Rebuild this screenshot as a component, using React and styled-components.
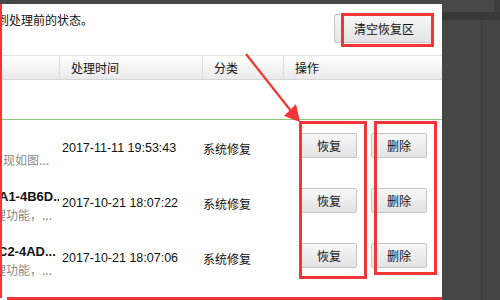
import React from "react";
import styled, { createGlobalStyle } from "styled-components";

const Global = createGlobalStyle`
  html, body { margin: 0; padding: 0; background: #464646; }
  body { font-family: "Liberation Sans", "Noto Sans CJK SC", sans-serif; }
`;

const Screen = styled.div`
  position: relative;
  width: 500px;
  height: 300px;
  overflow: hidden;
  display: flex;
  background: #464646;
`;

const Panel = styled.div`
  width: 442px;
  margin-top: 4px;
  height: 296px;
  background: #fff;
  display: flex;
  flex-direction: column;
  overflow: hidden;
`;

const Backdrop = styled.div`
  flex: 1;
  display: flex;
  flex-direction: column;
`;

const BackTop = styled.div`
  height: 12px;
  background: #484848;
  border-right: 6px solid #3e3e3e;
`;

const BackBand = styled.div`
  height: 8px;
  background: #383838;
`;

const BackRest = styled.div`
  flex: 1;
  background: #464646;
  border-right: 18px solid #444;
  box-shadow: inset -1px 0 0 #3c3c3c;
`;

const Top = styled.div`
  height: 51px;
  display: flex;
  justify-content: space-between;
  align-items: flex-start;
`;

const Desc = styled.div`
  margin-top: 9px;
  margin-left: -3px;
  font-size: 12px;
  line-height: 14px;
  color: #111;
  font-family: "Noto Sans CJK SC", sans-serif;
`;

const Btn = styled.button`
  box-sizing: border-box;
  width: ${(p) => p.$w}px;
  height: ${(p) => p.$h}px;
  padding: 0;
  border: 1px solid #c6c6c6;
  border-radius: 2px;
  background: linear-gradient(#f7f7f7, #e3e3e3);
  font-family: "Noto Sans CJK SC", sans-serif;
  font-size: 12px;
  color: #111;
  display: flex;
  align-items: center;
  justify-content: center;
`;

const TopBtn = styled(Btn)`
  margin-top: 10px;
  margin-right: 8px;
`;

const Grid = styled.div`
  display: grid;
  grid-template-columns: 59px 143px 81px 1fr;
`;

const Header = styled(Grid)`
  box-sizing: border-box;
  height: 25px;
  border-top: 1px solid #e2e2e2;
  border-bottom: 1px solid #d6d6d6;
  background: linear-gradient(#ffffff, #eaeaea);
`;

const HeadCell = styled.div`
  display: flex;
  align-items: center;
  padding-left: 11px;
  border-left: ${(p) => (p.$first ? "none" : "1px solid #dcdcdc")};
  font-family: "Noto Sans CJK SC", sans-serif;
  font-size: 12px;
  color: #111;
`;

const Gap = styled.div`
  height: 39px;
  border-bottom: 1px solid #86c978;
  flex-shrink: 0;
`;

const Row = styled(Grid)`
  height: 55px;
  flex-shrink: 0;
`;

const NameCell = styled.div`
  padding-top: 15px;
  display: flex;
  flex-direction: column;
  gap: 4px;
  white-space: nowrap;
  overflow: hidden;
`;

const Title = styled.div`
  font-size: 13px;
  line-height: 14px;
  font-weight: bold;
  color: #111;
  margin-left: ${(p) => p.$shift}px;
`;

const Sub = styled.div`
  font-family: "Noto Sans CJK SC", sans-serif;
  font-size: 12px;
  line-height: 14px;
  color: #8a8a8a;
  margin-left: ${(p) => p.$shift}px;
`;

const DateCell = styled.div`
  display: flex;
  align-items: center;
  padding-left: 3px;
  padding-top: 1px;
  font-size: 12.5px;
  color: #111;
  white-space: nowrap;
`;

const TypeCell = styled.div`
  display: flex;
  align-items: center;
  padding-left: 1px;
  padding-top: 1px;
  font-family: "Noto Sans CJK SC", sans-serif;
  font-size: 12px;
  color: #111;
`;

const OpCell = styled.div`
  display: flex;
  align-items: flex-start;
  padding-top: 13px;
  padding-left: 18px;
  gap: 14px;
`;

const Mark = styled.div`
  position: absolute;
  box-sizing: border-box;
  left: ${(p) => p.$x}px;
  top: ${(p) => p.$y}px;
  width: ${(p) => p.$w}px;
  height: ${(p) => p.$h}px;
  border: 3px solid #f23636;
  pointer-events: none;
`;

const Bar = styled.div`
  position: absolute;
  left: ${(p) => p.$x}px;
  top: ${(p) => p.$y}px;
  width: ${(p) => p.$w}px;
  height: ${(p) => p.$h}px;
  background: #f23636;
`;

const Overlay = styled.svg`
  position: absolute;
  left: 0;
  top: 0;
  pointer-events: none;
`;

const rows = [
  { title: "\u00a0", tShift: 0, sub: "现如图...", sShift: 3, date: "2017-11-11 19:53:43" },
  { title: "A1-4B6D...", tShift: -1, sub: "理功能，...", sShift: -6, date: "2017-10-21 18:07:22" },
  { title: "C2-4AD...", tShift: -2, sub: "理功能，...", sShift: -6, date: "2017-10-21 18:07:06" },
];

export default function App() {
  return (
    <>
      <Global />
      <Screen>
        <Panel>
          <Top>
            <Desc>到处理前的状态。</Desc>
            <TopBtn $w={100} $h={29}>清空恢复区</TopBtn>
          </Top>
          <Header>
            <HeadCell $first />
            <HeadCell>处理时间</HeadCell>
            <HeadCell>分类</HeadCell>
            <HeadCell>操作</HeadCell>
          </Header>
          <Gap />
          {rows.map((r, i) => (
            <Row key={i}>
              <NameCell>
                <Title $shift={r.tShift}>{r.title}</Title>
                <Sub $shift={r.sShift}>{r.sub}</Sub>
              </NameCell>
              <DateCell>{r.date}</DateCell>
              <TypeCell>系统修复</TypeCell>
              <OpCell>
                <Btn $w={56} $h={25}>恢复</Btn>
                <Btn $w={56} $h={25}>删除</Btn>
              </OpCell>
            </Row>
          ))}
        </Panel>
        <Backdrop>
          <BackTop />
          <BackBand />
          <BackRest />
        </Backdrop>

        <Bar $x={0} $y={4} $w={2} $h={294} />
        <Bar $x={7} $y={297} $w={435} $h={3} />
        <Mark $x={341} $y={13} $w={93} $h={34} />
        <Mark $x={299} $y={121} $w={68} $h={158} />
        <Mark $x={374} $y={121} $w={63} $h={154} />
        <Overlay width="500" height="300" viewBox="0 0 500 300">
          <line x1="246" y1="54" x2="291" y2="111" stroke="#f23636" strokeWidth="2.2" />
          <polygon points="300,122 284,116 296,104" fill="#f23636" />
        </Overlay>
      </Screen>
    </>
  );
}
